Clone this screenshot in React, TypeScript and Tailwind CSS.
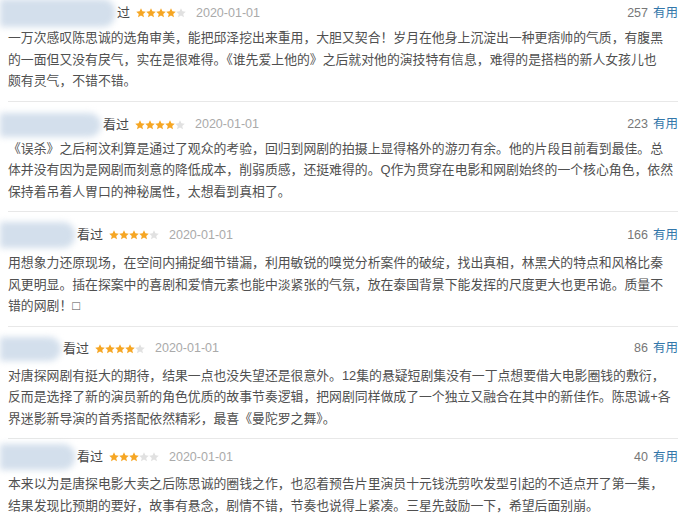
import React from 'react';

type Review = {
  blob: number;
  hideKan?: boolean;
  rating: number;
  votes: number;
  textGap: number;
  top: number;
  lines: string[];
  blobH: number;
};

const reviews: Review[] = [
  {
    blob: 115,
    hideKan: true,
    rating: 4,
    votes: 257,
    textGap: 3,
    top: 11,
    blobH: 28,
    lines: [
      '一万次感叹陈思诚的选角审美，能把邱泽挖出来重用，大胆又契合！岁月在他身上沉淀出一种更痞帅的气质，有腹黑',
      '的一面但又没有戾气，实在是很难得。《谁先爱上他的》之后就对他的演技特有信息，难得的是搭档的新人女孩儿也',
      '颇有灵气，不错不错。',
    ],
  },
  {
    blob: 101,
    rating: 4,
    votes: 223,
    textGap: 2,
    top: 12,
    blobH: 24,
    lines: [
      '《误杀》之后柯汶利算是通过了观众的考验，回归到网剧的拍摄上显得格外的游刃有余。他的片段目前看到最佳。总',
      '体并没有因为是网剧而刻意的降低成本，削弱质感，还挺难得的。Q作为贯穿在电影和网剧始终的一个核心角色，依然',
      '保持着吊着人胃口的神秘属性，太想看到真相了。',
    ],
  },
  {
    blob: 75,
    rating: 4,
    votes: 166,
    textGap: 6,
    top: 12,
    blobH: 26,
    lines: [
      '用想象力还原现场，在空间内捕捉细节错漏，利用敏锐的嗅觉分析案件的破绽，找出真相，林黑犬的特点和风格比秦',
      '风更明显。插在探案中的喜剧和爱情元素也能中淡紧张的气氛，放在泰国背景下能发挥的尺度更大也更吊诡。质量不',
      '错的网剧！□',
    ],
  },
  {
    blob: 61,
    rating: 4,
    votes: 86,
    textGap: 5,
    top: 11,
    blobH: 24,
    lines: [
      '对唐探网剧有挺大的期待，结果一点也没失望还是很意外。12集的悬疑短剧集没有一丁点想要借大电影圈钱的敷衍，',
      '反而是选择了新的演员新的角色优质的故事节奏逻辑，把网剧同样做成了一个独立又融合在其中的新佳作。陈思诚+各',
      '界迷影新导演的首秀搭配依然精彩，最喜《曼陀罗之舞》。',
    ],
  },
  {
    blob: 75,
    rating: 3,
    votes: 40,
    textGap: 5,
    top: 7,
    blobH: 26,
    lines: [
      '本来以为是唐探电影大卖之后陈思诚的圈钱之作，也忍着预告片里演员十元钱洗剪吹发型引起的不适点开了第一集，',
      '结果发现比预期的要好，故事有悬念，剧情不错，节奏也说得上紧凑。三星先鼓励一下，希望后面别崩。',
    ],
  },
];

const Star = ({ on }: { on: boolean }) => (
  <svg width="10" height="10" viewBox="1 1 22 22" className="shrink-0">
    <path
      d="M12 1.5l3.1 6.9 7.4.7-5.6 5 1.7 7.4L12 17.6l-6.6 3.9 1.7-7.4-5.6-5 7.4-.7z"
      fill={on ? '#f6a623' : '#e1e1e1'}
    />
  </svg>
);

function Item({ r, last }: { r: Review; last: boolean }) {
  return (
    <div
      className={last ? '' : 'pb-[9px] border-b border-[#e8e8e8]'}
      style={{ paddingTop: r.top }}
    >
      <div className="flex items-center h-[22px]">
        <div className="relative shrink-0 -ml-2 h-[22px]" style={{ width: r.blob + 2 }}>
          <div
            className="absolute left-0 top-1/2 -translate-y-1/2 rounded-r-[12px] bg-[#d3dfec] blur-[3px]"
            style={{ width: r.blob, height: r.blobH }}
          />
        </div>
        <span className="relative text-[13px] text-[#494949]">{r.hideKan ? '过' : '看过'}</span>
        <span className="flex ml-[6px]">
          {[0, 1, 2, 3, 4].map((i) => (
            <Star key={i} on={i < r.rating} />
          ))}
        </span>
        <span className="ml-[10px] text-[12.5px] text-[#aaaaaa]">2020-01-01</span>
        <span className="flex-1" />
        <span className="text-[12.5px] text-[#777777]">{r.votes}</span>
        <span className="ml-[5px] text-[12.5px] text-[#3377aa]">有用</span>
      </div>
      <div className="text-[12.85px] leading-[21.5px] text-[#505050]" style={{ marginTop: r.textGap }}>
        {r.lines.map((l, i) => (
          <div key={i} className="whitespace-nowrap">{l}</div>
        ))}
      </div>
    </div>
  );
}

export default function App() {
  return (
    <div
      className="w-[700px] h-[529px] overflow-hidden bg-white pl-2 pr-[22px] -mt-[9px]"
      style={{ fontFamily: '"Liberation Sans", "Noto Sans CJK SC", sans-serif' }}
    >
      {reviews.map((r, i) => (
        <Item key={i} r={r} last={i === reviews.length - 1} />
      ))}
    </div>
  );
}
